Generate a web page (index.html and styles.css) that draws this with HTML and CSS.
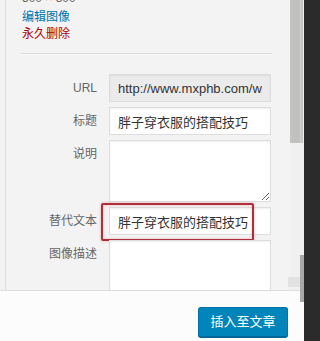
FILE: index.html
```html
<!DOCTYPE html>
<html lang="zh-CN">
<head>
<meta charset="utf-8">
<title>附件详情</title>
<link rel="stylesheet" href="styles.css">
</head>
<body>
<div class="frame">
  <div class="main">
    <div class="content">
      <div class="sidebar">
        <div class="info">
          <div class="dims">300 × 300</div>
          <div class="edit">编辑图像</div>
          <div class="delete">永久删除</div>
        </div>
        <div class="sep"></div>
        <div class="settings">
          <div class="row">
            <span class="label">URL</span>
            <input class="field readonly" type="text" value="http://www.mxphb.com/wp-content/uploads/2015/pangzi.jpg" readonly>
          </div>
          <div class="row">
            <span class="label">标题</span>
            <input class="field" type="text" value="胖子穿衣服的搭配技巧">
          </div>
          <div class="row">
            <span class="label">说明</span>
            <textarea class="area"></textarea>
          </div>
          <div class="row">
            <span class="label">替代文本</span>
            <input class="field" type="text" value="胖子穿衣服的搭配技巧">
            <div class="highlight"></div>
          </div>
          <div class="row">
            <span class="label">图像描述</span>
            <textarea class="area"></textarea>
          </div>
        </div>
      </div>
      <div class="scrollbar"><div class="thumb"></div></div>
    </div>
    <div class="toolbar">
      <button class="btn" type="button">插入至文章</button>
    </div>
  </div>
  <div class="edge"></div>
</div>
<div class="arrow"></div>
<div class="arrow-sq"></div>
</body>
</html>
```
FILE: styles.css
```css
* { box-sizing: border-box; }
html, body { margin: 0; padding: 0; }
body {
  width: 308px;
  height: 341px;
  overflow: hidden;
  position: relative;
  background: #2b2b2b;
  font-family: "Liberation Sans", "Noto Sans CJK SC", sans-serif;
}
.frame { display: flex; height: 341px; }
.main { width: 304px; display: flex; flex-direction: column; }
.content {
  height: 290px;
  display: flex;
  overflow: hidden;
  background: #f3f3f3;
}
.sidebar {
  width: 285px;
  margin-left: 5px;
  border-left: 1px solid #dcdcdc;
  padding: 0 18px 0 15px;
}
.info {
  margin-top: -9px;
  padding-left: 1px;
  font-size: 12px;
  line-height: 17px;
}
.dims { color: #666; line-height: 15px; margin-bottom: 3px; }
.edit { color: #0073aa; }
.delete { color: #a00; }
.sep {
  margin-top: 10px;
  border-top: 1px solid #ddd;
  border-bottom: 1px solid #fafafa;
}
.settings {
  margin-top: 19px;
  display: flex;
  flex-direction: column;
  gap: 5px;
}
.row { display: flex; align-items: flex-start; position: relative; }
.label {
  width: 76px;
  margin-right: 12px;
  flex: none;
  text-align: right;
  font-size: 12px;
  line-height: 28px;
  color: #666;
}
.field {
  width: 162px;
  height: 28px;
  margin: 0;
  border: 1px solid #ddd;
  border-radius: 0;
  background: #fff;
  box-shadow: inset 0 1px 2px rgba(0, 0, 0, 0.07);
  padding: 0 8px;
  font: 13px/26px "Liberation Sans", "Noto Sans CJK SC", sans-serif;
  color: #333;
  outline: none;
}
.readonly { background: #ebebeb; }
.area {
  width: 162px;
  height: 62px;
  margin: 0;
  border: 1px solid #ddd;
  border-radius: 0;
  background: #fff;
  box-shadow: inset 0 1px 2px rgba(0, 0, 0, 0.07);
  padding: 6px 8px;
  font: 13px/18px "Liberation Sans", "Noto Sans CJK SC", sans-serif;
  color: #333;
  outline: none;
}
.highlight {
  position: absolute;
  left: 80px;
  top: -4px;
  width: 153px;
  height: 38px;
  border: 2px solid #ad2f39;
  border-radius: 2px;
  box-shadow: 0 0 3px rgba(220, 80, 80, 0.45), inset 0 0 3px rgba(220, 80, 80, 0.35);
  pointer-events: none;
}
.scrollbar {
  width: 14px;
  background: #f0f0f0;
}
.thumb {
  width: 13px;
  height: 143px;
  background: linear-gradient(to right, #c3c4c2 0, #bfc0be 70%, #cfd0ce 80%, #c0c1bf 100%);
}
.toolbar {
  height: 51px;
  border-top: 1px solid #ddd;
  background: #fcfcfc;
  display: flex;
  justify-content: flex-end;
  align-items: flex-start;
  padding: 16px 16px 0 0;
}
.btn {
  width: 90px;
  height: 30px;
  margin: 0;
  padding: 0;
  background: #0085ba;
  border: 1px solid #0073aa;
  border-bottom-color: #006799;
  border-radius: 3px;
  box-shadow: 0 1px 0 #006799;
  color: #fff;
  font: 13px/28px "Liberation Sans", "Noto Sans CJK SC", sans-serif;
  text-align: center;
}
.edge { width: 4px; background: #2b2b2b; }
.arrow {
  position: absolute;
  left: 300px;
  top: 255px;
  width: 4px;
  height: 47px;
  background: #a8a8a8;
}
.arrow-sq {
  position: absolute;
  left: 288px;
  top: 277px;
  width: 12px;
  height: 10px;
  background: #e2e2e2;
}
```
